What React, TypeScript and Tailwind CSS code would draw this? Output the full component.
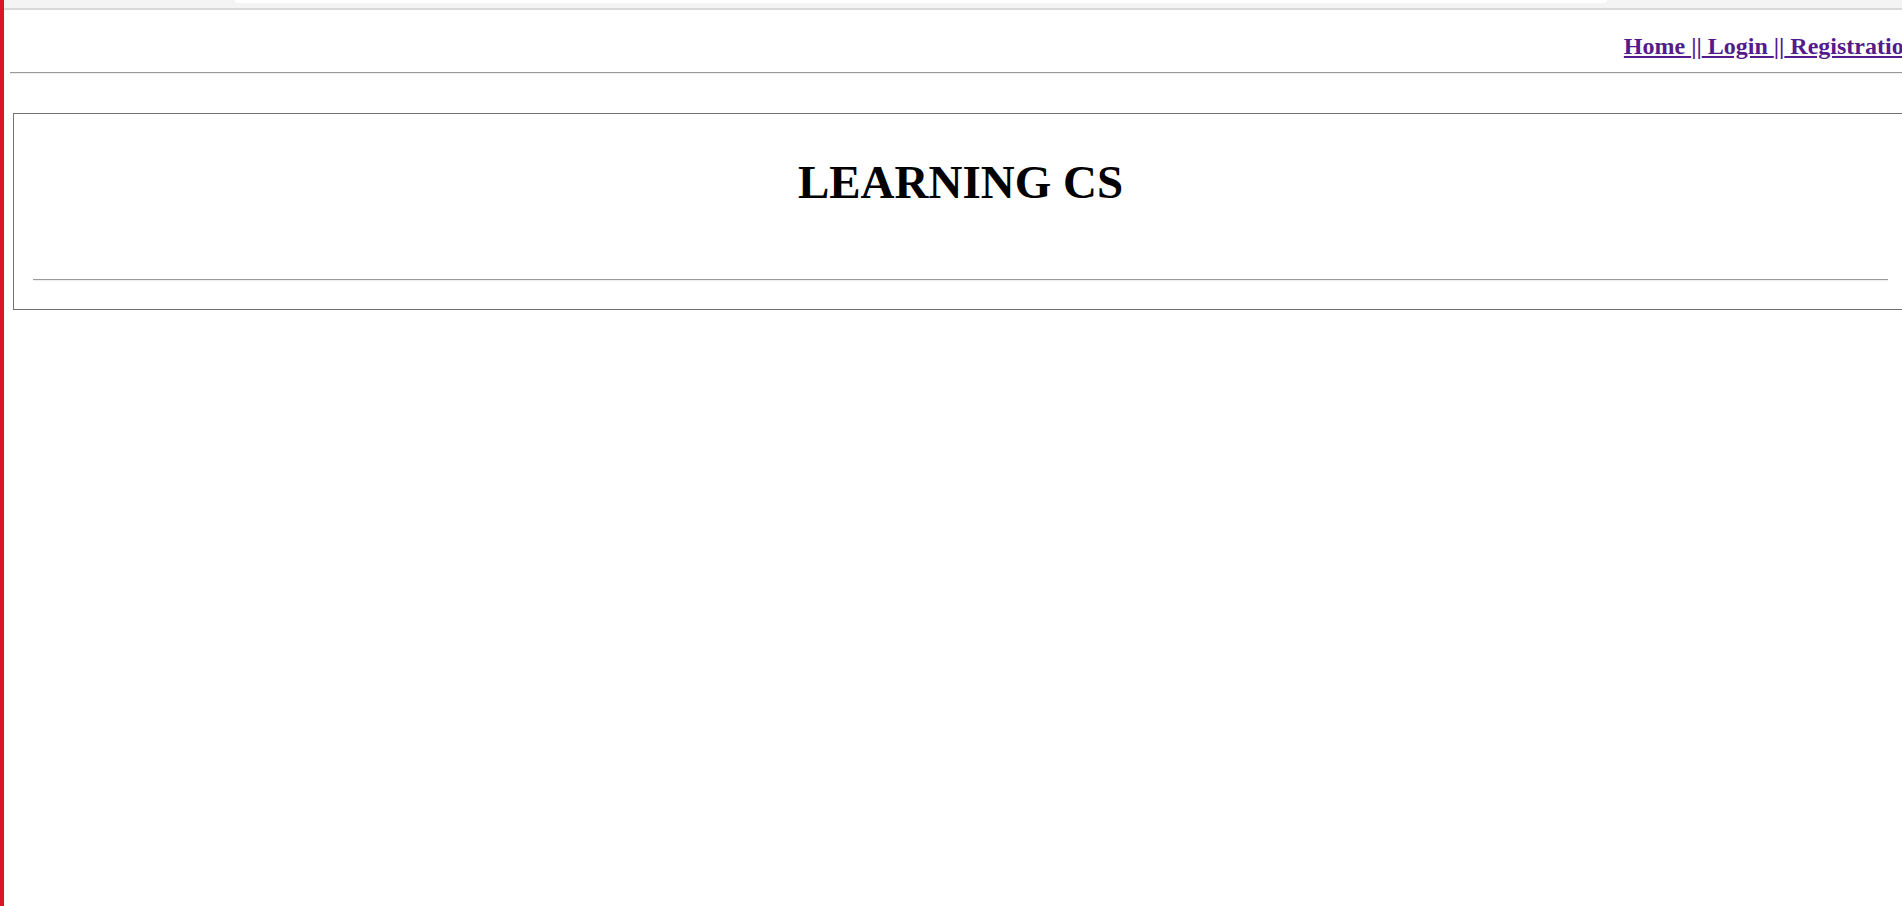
export default function App() {
  return (
    <div className="flex h-[906px] w-full overflow-hidden bg-white font-['Liberation_Serif','Times_New_Roman',serif]">
      {/* red window edge */}
      <div className="w-[4px] shrink-0 bg-[#dc1428]" />

      <div className="flex min-w-0 flex-1 flex-col">
        {/* browser strip */}
        <div className="flex h-[10px] shrink-0 items-start border-b-2 border-[#d9d9d9] bg-[#f4f4f4]">
          <div className="w-[231px] shrink-0" />
          <div className="h-[3px] w-[1372px] shrink-0 rounded-b-[6px] bg-white" />
        </div>

        <div className="min-w-0 flex-1 overflow-hidden">
          <div className="w-[1920px]">
            <nav className="mt-[22px] pr-[7px] text-right text-[24px] font-bold leading-[28px] text-[#551a8b]">
              <a href="#" className="underline">Home </a>
              ||
              <a href="#" className="underline"> Login </a>
              ||
              <a href="#" className="underline"> Registration</a>
            </nav>

            <hr className="mx-[6px] mt-[12px] border-t border-b border-t-[#9a9a9a] border-b-[#eeeeee]" />

            <div className="ml-[9px] mt-[39px] w-[1895px] border border-[#737373] px-[19px] pb-[28px] pt-[40px]">
              <h1 className="text-center text-[47px] font-bold leading-[56px] text-black">LEARNING CS</h1>
              <hr className="mt-[69px] border-t border-b border-t-[#9a9a9a] border-b-[#eeeeee]" />
            </div>
          </div>
        </div>
      </div>
    </div>
  );
}
